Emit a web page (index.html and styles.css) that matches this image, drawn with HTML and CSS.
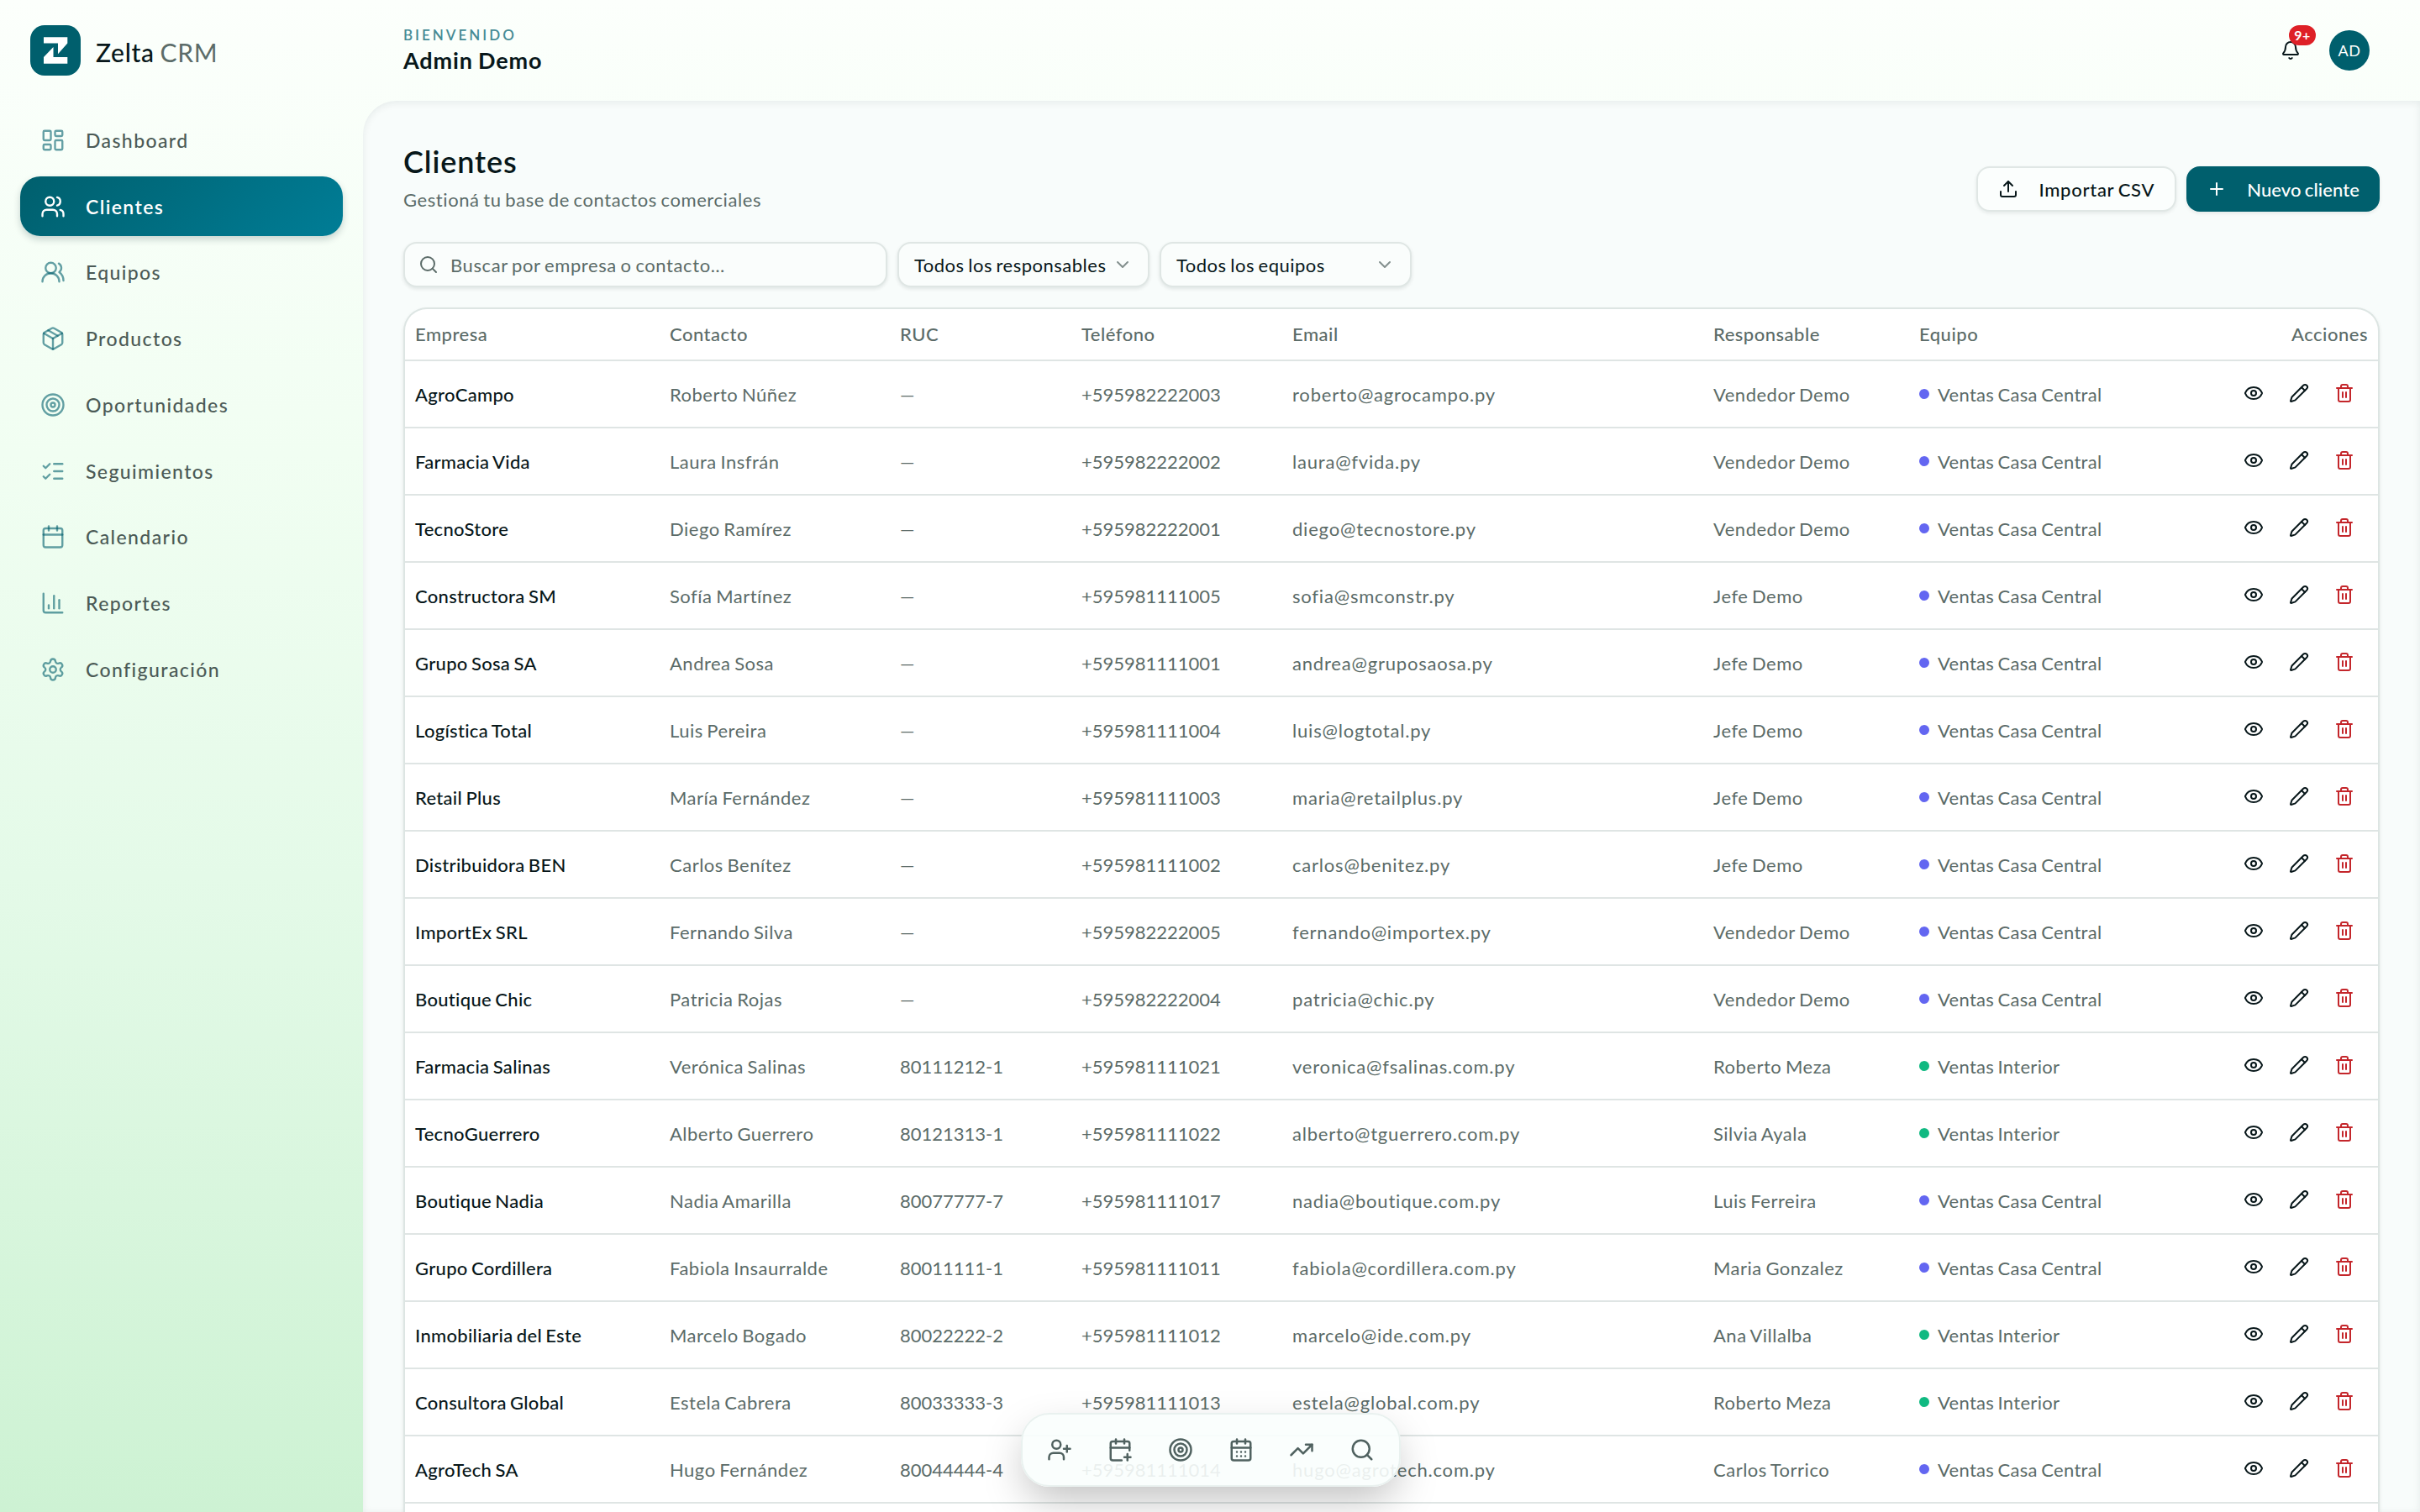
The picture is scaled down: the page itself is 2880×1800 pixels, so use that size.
FILE: index.html
```html
<!DOCTYPE html>
<html lang="es">
<head>
    <meta charset="UTF-8">
    <meta name="viewport" content="width=device-width, initial-scale=1.0">
    <title>Clientes - Zelta CRM</title>
    <link rel="stylesheet" href="styles.css">
</head>
<body>
    <!-- Iconos -->
    <svg class="sprite" aria-hidden="true">
        <symbol id="dashboard" viewBox="0 0 24 24"><rect x="3" y="3" width="7" height="9" rx="1"/><rect x="14" y="3" width="7" height="5" rx="1"/><rect x="14" y="12" width="7" height="9" rx="1"/><rect x="3" y="16" width="7" height="5" rx="1"/></symbol>
        <symbol id="users" viewBox="0 0 24 24"><path d="M16 21v-2a4 4 0 0 0-4-4H6a4 4 0 0 0-4 4v2"/><circle cx="9" cy="7" r="4"/><path d="M22 21v-2a4 4 0 0 0-3-3.87"/><path d="M16 3.128a4 4 0 0 1 0 7.744"/></symbol>
        <symbol id="teams" viewBox="0 0 24 24"><path d="M18 21a8 8 0 0 0-16 0"/><circle cx="10" cy="8" r="5"/><path d="M22 20c0-3.37-2-6.5-4-8a5 5 0 0 0-.45-8.3"/></symbol>
        <symbol id="package" viewBox="0 0 24 24"><path d="M11 21.73a2 2 0 0 0 2 0l7-4A2 2 0 0 0 21 16V8a2 2 0 0 0-1-1.73l-7-4a2 2 0 0 0-2 0l-7 4A2 2 0 0 0 3 8v8a2 2 0 0 0 1 1.73z"/><path d="M12 22V12"/><path d="M3.29 7 12 12l8.71-5"/><path d="m7.5 4.27 9 5.15"/></symbol>
        <symbol id="target" viewBox="0 0 24 24"><circle cx="12" cy="12" r="10"/><circle cx="12" cy="12" r="6"/><circle cx="12" cy="12" r="2"/></symbol>
        <symbol id="checks" viewBox="0 0 24 24"><path d="m3 17 2 2 4-4"/><path d="m3 7 2 2 4-4"/><path d="M13 5h8"/><path d="M13 12h8"/><path d="M13 19h8"/></symbol>
        <symbol id="calendar" viewBox="0 0 24 24"><path d="M8 2v4"/><path d="M16 2v4"/><rect x="3" y="4" width="18" height="18" rx="2"/><path d="M3 10h18"/></symbol>
        <symbol id="chart" viewBox="0 0 24 24"><path d="M3 3v16a2 2 0 0 0 2 2h16"/><path d="M18 17V9"/><path d="M13 17V5"/><path d="M8 17v-3"/></symbol>
        <symbol id="settings" viewBox="0 0 24 24"><path d="M9.671 4.136a2.34 2.34 0 0 1 4.659 0 2.34 2.34 0 0 0 3.319 1.915 2.34 2.34 0 0 1 2.33 4.033 2.34 2.34 0 0 0 0 3.831 2.34 2.34 0 0 1-2.33 4.033 2.34 2.34 0 0 0-3.319 1.915 2.34 2.34 0 0 1-4.659 0 2.34 2.34 0 0 0-3.32-1.915 2.34 2.34 0 0 1-2.33-4.033 2.34 2.34 0 0 0 0-3.831A2.34 2.34 0 0 1 6.35 6.051a2.34 2.34 0 0 0 3.319-1.915"/><circle cx="12" cy="12" r="3"/></symbol>
        <symbol id="bell" viewBox="0 0 24 24"><path d="M10.268 21a2 2 0 0 0 3.464 0"/><path d="M3.262 15.326A1 1 0 0 0 4 17h16a1 1 0 0 0 .74-1.673C19.41 13.956 18 12.499 18 8A6 6 0 0 0 6 8c0 4.499-1.411 5.956-2.738 7.326"/></symbol>
        <symbol id="upload" viewBox="0 0 24 24"><path d="M12 3v12"/><path d="m17 8-5-5-5 5"/><path d="M21 15v4a2 2 0 0 1-2 2H5a2 2 0 0 1-2-2v-4"/></symbol>
        <symbol id="plus" viewBox="0 0 24 24"><path d="M5 12h14"/><path d="M12 5v14"/></symbol>
        <symbol id="search" viewBox="0 0 24 24"><circle cx="11" cy="11" r="8"/><path d="m21 21-4.34-4.34"/></symbol>
        <symbol id="chevron" viewBox="0 0 24 24"><path d="m6 9 6 6 6-6"/></symbol>
        <symbol id="eye" viewBox="0 0 24 24"><path d="M2.062 12.348a1 1 0 0 1 0-.696 10.75 10.75 0 0 1 19.876 0 1 1 0 0 1 0 .696 10.75 10.75 0 0 1-19.876 0"/><circle cx="12" cy="12" r="3"/></symbol>
        <symbol id="pencil" viewBox="0 0 24 24"><path d="M21.174 6.812a1 1 0 0 0-3.986-3.987L3.842 16.174a2 2 0 0 0-.5.83l-1.321 4.352a.5.5 0 0 0 .623.622l4.353-1.32a2 2 0 0 0 .83-.497z"/><path d="m15 5 4 4"/></symbol>
        <symbol id="trash" viewBox="0 0 24 24"><path d="M10 11v6"/><path d="M14 11v6"/><path d="M19 6v14a2 2 0 0 1-2 2H7a2 2 0 0 1-2-2V6"/><path d="M3 6h18"/><path d="M8 6V4a2 2 0 0 1 2-2h4a2 2 0 0 1 2 2v2"/></symbol>
        <symbol id="user-plus" viewBox="0 0 24 24"><path d="M16 21v-2a4 4 0 0 0-4-4H6a4 4 0 0 0-4 4v2"/><circle cx="9" cy="7" r="4"/><path d="M19 8v6"/><path d="M22 11h-6"/></symbol>
        <symbol id="calendar-plus" viewBox="0 0 24 24"><path d="M16 19h6"/><path d="M16 2v4"/><path d="M19 16v6"/><path d="M21 12.598V6a2 2 0 0 0-2-2H5a2 2 0 0 0-2 2v14a2 2 0 0 0 2 2h8.5"/><path d="M3 10h18"/><path d="M8 2v4"/></symbol>
        <symbol id="calendar-days" viewBox="0 0 24 24"><path d="M8 2v4"/><path d="M16 2v4"/><rect x="3" y="4" width="18" height="18" rx="2"/><path d="M3 10h18"/><path d="M8 14h.01M12 14h.01M16 14h.01M8 18h.01M12 18h.01M16 18h.01"/></symbol>
        <symbol id="trending" viewBox="0 0 24 24"><path d="M16 7h6v6"/><path d="m22 7-8.5 8.5-5-5L2 17"/></symbol>
    </svg>

    <aside class="sidebar">
        <div class="brand">
            <svg class="logo" viewBox="0 0 60 60">
                <rect width="60" height="60" rx="17"/>
                <path class="mark" d="M16 14.3H44.3V21.5L33 34.3V21.5H16ZM16 45.7H44.3V38H27.5V26L16 38Z"/>
            </svg>
            <div class="brand-name">Zelta <span>CRM</span></div>
        </div>
        <nav class="nav">
            <a class="nav-item"><svg class="icon"><use href="#dashboard"/></svg>Dashboard</a>
            <a class="nav-item active"><svg class="icon"><use href="#users"/></svg>Clientes</a>
            <a class="nav-item"><svg class="icon"><use href="#teams"/></svg>Equipos</a>
            <a class="nav-item"><svg class="icon"><use href="#package"/></svg>Productos</a>
            <a class="nav-item"><svg class="icon"><use href="#target"/></svg>Oportunidades</a>
            <a class="nav-item"><svg class="icon"><use href="#checks"/></svg>Seguimientos</a>
            <a class="nav-item"><svg class="icon"><use href="#calendar"/></svg>Calendario</a>
            <a class="nav-item"><svg class="icon"><use href="#chart"/></svg>Reportes</a>
            <a class="nav-item"><svg class="icon"><use href="#settings"/></svg>Configuración</a>
        </nav>
    </aside>

    <div class="page">
        <header class="topbar">
            <div>
                <div class="welcome">BIENVENIDO</div>
                <div class="user-name">Admin Demo</div>
            </div>
            <div class="topbar-actions">
                <div class="notifications">
                    <svg class="icon small"><use href="#bell"/></svg>
                    <span class="badge">9+</span>
                </div>
                <div class="avatar">AD</div>
            </div>
        </header>

        <main class="content">
            <div class="heading">
                <div>
                    <h1>Clientes</h1>
                    <p class="subtitle">Gestioná tu base de contactos comerciales</p>
                </div>
                <div class="buttons">
                    <button class="btn"><svg class="icon small"><use href="#upload"/></svg>Importar CSV</button>
                    <button class="btn primary"><svg class="icon small"><use href="#plus"/></svg>Nuevo cliente</button>
                </div>
            </div>

            <div class="filters">
                <div class="field search"><svg class="icon small"><use href="#search"/></svg>Buscar por empresa o contacto…</div>
                <div class="field select"><span>Todos los responsables</span><svg class="icon small"><use href="#chevron"/></svg></div>
                <div class="field select"><span>Todos los equipos</span><svg class="icon small"><use href="#chevron"/></svg></div>
            </div>

            <div class="card">
                <table>
                    <thead>
                        <tr>
                            <th class="col-empresa">Empresa</th>
                            <th class="col-contacto">Contacto</th>
                            <th class="col-ruc">RUC</th>
                            <th class="col-telefono">Teléfono</th>
                            <th class="col-email">Email</th>
                            <th class="col-responsable">Responsable</th>
                            <th class="col-equipo">Equipo</th>
                            <th class="col-acciones">Acciones</th>
                        </tr>
                    </thead>
                    <tbody id="clientes"></tbody>
                </table>
            </div>
        </main>
    </div>

    <div class="dock">
        <button><svg class="icon"><use href="#user-plus"/></svg></button>
        <button><svg class="icon"><use href="#calendar-plus"/></svg></button>
        <button><svg class="icon"><use href="#target"/></svg></button>
        <button><svg class="icon"><use href="#calendar-days"/></svg></button>
        <button><svg class="icon"><use href="#trending"/></svg></button>
        <button><svg class="icon"><use href="#search"/></svg></button>
    </div>

    <script>
        const clientes = [
            ['AgroCampo', 'Roberto Núñez', '—', '+595982222003', 'roberto@agrocampo.py', 'Vendedor Demo', 'Casa Central'],
            ['Farmacia Vida', 'Laura Insfrán', '—', '+595982222002', 'laura@fvida.py', 'Vendedor Demo', 'Casa Central'],
            ['TecnoStore', 'Diego Ramírez', '—', '+595982222001', 'diego@tecnostore.py', 'Vendedor Demo', 'Casa Central'],
            ['Constructora SM', 'Sofía Martínez', '—', '+595981111005', 'sofia@smconstr.py', 'Jefe Demo', 'Casa Central'],
            ['Grupo Sosa SA', 'Andrea Sosa', '—', '+595981111001', 'andrea@gruposaosa.py', 'Jefe Demo', 'Casa Central'],
            ['Logística Total', 'Luis Pereira', '—', '+595981111004', 'luis@logtotal.py', 'Jefe Demo', 'Casa Central'],
            ['Retail Plus', 'María Fernández', '—', '+595981111003', 'maria@retailplus.py', 'Jefe Demo', 'Casa Central'],
            ['Distribuidora BEN', 'Carlos Benítez', '—', '+595981111002', 'carlos@benitez.py', 'Jefe Demo', 'Casa Central'],
            ['ImportEx SRL', 'Fernando Silva', '—', '+595982222005', 'fernando@importex.py', 'Vendedor Demo', 'Casa Central'],
            ['Boutique Chic', 'Patricia Rojas', '—', '+595982222004', 'patricia@chic.py', 'Vendedor Demo', 'Casa Central'],
            ['Farmacia Salinas', 'Verónica Salinas', '80111212-1', '+595981111021', 'veronica@fsalinas.com.py', 'Roberto Meza', 'Interior'],
            ['TecnoGuerrero', 'Alberto Guerrero', '80121313-1', '+595981111022', 'alberto@tguerrero.com.py', 'Silvia Ayala', 'Interior'],
            ['Boutique Nadia', 'Nadia Amarilla', '80077777-7', '+595981111017', 'nadia@boutique.com.py', 'Luis Ferreira', 'Casa Central'],
            ['Grupo Cordillera', 'Fabiola Insaurralde', '80011111-1', '+595981111011', 'fabiola@cordillera.com.py', 'Maria Gonzalez', 'Casa Central'],
            ['Inmobiliaria del Este', 'Marcelo Bogado', '80022222-2', '+595981111012', 'marcelo@ide.com.py', 'Ana Villalba', 'Interior'],
            ['Consultora Global', 'Estela Cabrera', '80033333-3', '+595981111013', 'estela@global.com.py', 'Roberto Meza', 'Interior'],
            ['AgroTech SA', 'Hugo Fernández', '80044444-4', '+595981111014', 'hugo@agrotech.com.py', 'Carlos Torrico', 'Casa Central']
        ];

        document.getElementById('clientes').innerHTML = clientes.map(c => `
            <tr>
                <td class="empresa">${c[0]}</td>
                <td>${c[1]}</td>
                <td class="numero">${c[2]}</td>
                <td class="numero">${c[3]}</td>
                <td class="email">${c[4]}</td>
                <td>${c[5]}</td>
                <td><div class="equipo"><span class="dot ${c[6] === 'Interior' ? 'interior' : ''}"></span>Ventas ${c[6]}</div></td>
                <td>
                    <div class="acciones">
                        <button><svg class="icon small"><use href="#eye"/></svg></button>
                        <button><svg class="icon small"><use href="#pencil"/></svg></button>
                        <button class="delete"><svg class="icon small"><use href="#trash"/></svg></button>
                    </div>
                </td>
            </tr>`).join('');
    </script>
</body>
</html>
```
FILE: styles.css
```css
* {
    box-sizing: border-box;
}
body {
    display: flex;
    height: 100vh;
    margin: 0;
    overflow: hidden;
    font-family: Lato, "Open Sans", sans-serif;
    font-size: 22px;
    letter-spacing: 0.5px;
    word-spacing: -1.5px;
    color: #08171a;
    background: linear-gradient(180deg, #fcfffc 0%, #f1fef2 30%, #e4fae8 58%, #cdf2d3 100%);
}
button {
    padding: 0;
    border: none;
    background: none;
    font: inherit;
    letter-spacing: inherit;
    word-spacing: inherit;
    color: inherit;
}
.sprite {
    display: none;
}
.icon {
    width: 30px;
    height: 30px;
    flex: none;
    fill: none;
    stroke: currentColor;
    stroke-width: 1.75;
    stroke-linecap: round;
    stroke-linejoin: round;
}
.icon.small {
    width: 24px;
    height: 24px;
    stroke-width: 2;
}

/* Barra lateral */
.sidebar {
    width: 432px;
    flex: none;
}
.brand {
    display: flex;
    align-items: center;
    gap: 18px;
    height: 120px;
    padding-left: 36px;
}
.logo {
    width: 60px;
    height: 60px;
    fill: #005f6d;
}
.logo .mark {
    fill: #fff;
}
.brand-name {
    padding-top: 4px;
    font-size: 30px;
    font-weight: 500;
    letter-spacing: 0.7px;
}
.brand-name span {
    font-weight: 400;
    color: #5c6c69;
}
.nav {
    display: flex;
    flex-direction: column;
    gap: 8px;
    padding: 11.5px 24px;
}
.nav-item {
    display: flex;
    align-items: center;
    gap: 24px;
    height: 70.75px;
    padding-left: 24px;
    border-radius: 24px;
    font-size: 23px;
    font-weight: 500;
    letter-spacing: 1.4px;
    color: #4b5a56;
}
.nav-item .icon {
    color: rgba(0, 95, 109, 0.6);
    stroke-width: 1.9;
}
.nav-item.active {
    background: linear-gradient(135deg, #005f6d, #007d96);
    box-shadow: 0 4px 8px rgba(0, 40, 50, 0.2);
    color: #fff;
    font-weight: 600;
}
.nav-item.active .icon {
    color: #fff;
}

/* Cabecera */
.page {
    display: flex;
    flex-direction: column;
    flex: 1;
}
.topbar {
    display: flex;
    justify-content: space-between;
    align-items: center;
    flex: none;
    height: 120px;
    padding: 0 60px 0 48px;
}
.welcome {
    font-size: 17px;
    font-weight: 600;
    line-height: 24px;
    letter-spacing: 3px;
    color: #468b95;
}
.user-name {
    font-size: 27px;
    font-weight: 700;
    line-height: 36px;
    letter-spacing: 0.9px;
}
.topbar-actions {
    display: flex;
    align-items: center;
    gap: 34px;
}
.notifications {
    position: relative;
    height: 24px;
}
.badge {
    position: absolute;
    top: -18px;
    left: 10px;
    width: 32px;
    height: 24px;
    border-radius: 12px;
    background: #de2027;
    color: #fff;
    font-size: 16px;
    font-weight: 700;
    line-height: 24px;
    text-align: center;
}
.avatar {
    width: 48px;
    height: 48px;
    border-radius: 50%;
    background: #005f6d;
    color: #fff;
    font-size: 18px;
    font-weight: 400;
    line-height: 48px;
    text-align: center;
}

/* Contenido */
.content {
    display: flex;
    flex-direction: column;
    flex: 1;
    min-height: 0;
    padding: 45px 48px 0;
    border-radius: 40px 0 0 0;
    background: #f8fcfb;
    box-shadow: inset 0 2px 10px rgba(0, 40, 40, 0.08);
}
.heading {
    display: flex;
    justify-content: space-between;
    align-items: flex-end;
}
h1 {
    margin: 0;
    font-size: 36px;
    font-weight: 600;
    line-height: 54px;
    letter-spacing: 0.9px;
}
.subtitle {
    margin: 0;
    padding-top: 1px;
    line-height: 36px;
    letter-spacing: 0.58px;
    color: #5b6b68;
}
.buttons {
    display: flex;
    gap: 12px;
    padding-bottom: 4px;
}
.btn {
    display: flex;
    align-items: center;
    gap: 24px;
    height: 54px;
    padding: 0 24px;
    border: 2px solid #e0e7e5;
    border-radius: 16px;
    background: #fbfefd;
    box-shadow: 0 2px 4px rgba(0, 30, 30, 0.08);
    font-weight: 500;
    letter-spacing: 0.72px;
}
.btn.primary {
    border: none;
    background: #005f6d;
    color: #fff;
    letter-spacing: 0.1px;
}
.filters {
    display: flex;
    gap: 12px;
    margin: 32px 0 24px;
}
.field {
    display: flex;
    align-items: center;
    height: 54px;
    border: 2px solid #dfe6e4;
    border-radius: 16px;
    background: #fafdfc;
    box-shadow: 0 2px 4px rgba(0, 30, 30, 0.1);
}
.search {
    gap: 14px;
    width: 576px;
    padding-left: 16px;
    letter-spacing: 0.6px;
    color: #5b6b68;
}
.select {
    justify-content: space-between;
    width: 300px;
    padding: 0 18px;
}
.select .icon {
    color: #83908e;
}

/* Tabla */
.card {
    flex: 1;
    overflow: hidden;
    border: 2px solid #dde5e3;
    border-bottom: none;
    border-radius: 28px 28px 0 0;
    background: #fff;
    box-shadow: 0 2px 4px rgba(0, 30, 30, 0.08);
}
table {
    width: 100%;
    table-layout: fixed;
    border-spacing: 0;
}
th, td {
    padding: 0 12px;
    border-bottom: 2px solid #dfe5e4;
    text-align: left;
    white-space: nowrap;
}
th {
    height: 62px;
    padding-bottom: 1px;
    font-weight: 500;
    color: #5b6b68;
}
td {
    height: 80px;
    color: #5b6b68;
}
.col-empresa { width: 303px; }
.col-contacto { width: 274px; }
.col-ruc { width: 216px; }
.col-telefono { width: 251px; }
.col-email { width: 501px; }
.col-responsable { width: 245px; }
.col-equipo { width: 250px; }
.col-acciones { text-align: right; }
.empresa {
    letter-spacing: 0.3px;
    font-weight: 500;
    color: #08171a;
}
.numero {
    letter-spacing: 0;
}
.email {
    letter-spacing: 0.8px;
}
.equipo {
    display: flex;
    align-items: center;
    gap: 10px;
    letter-spacing: 0.3px;
}
.dot {
    width: 12px;
    height: 12px;
    border-radius: 50%;
    background: #6366f1;
}
.dot.interior {
    background: #10b981;
}
.acciones {
    display: flex;
    justify-content: flex-end;
    padding: 0 1px 2px 0;
    color: #08171a;
}
.acciones button {
    display: flex;
    justify-content: center;
    width: 54px;
}
.acciones .delete {
    color: #c4262b;
}

/* Accesos rápidos */
.dock {
    position: fixed;
    left: calc(50% + 1px);
    bottom: 30px;
    display: flex;
    gap: 12px;
    height: 88px;
    padding: 12px 14px;
    border: 2px solid #e9f1ef;
    border-radius: 34px;
    background: rgba(249, 254, 253, 0.9);
    box-shadow: 0 20px 50px -6px rgba(0, 0, 0, 0.26);
    transform: translateX(-50%);
    color: #506260;
}
.dock button {
    display: flex;
    justify-content: center;
    align-items: center;
    width: 60px;
}
.dock .icon {
    stroke-width: 2;
}
```
